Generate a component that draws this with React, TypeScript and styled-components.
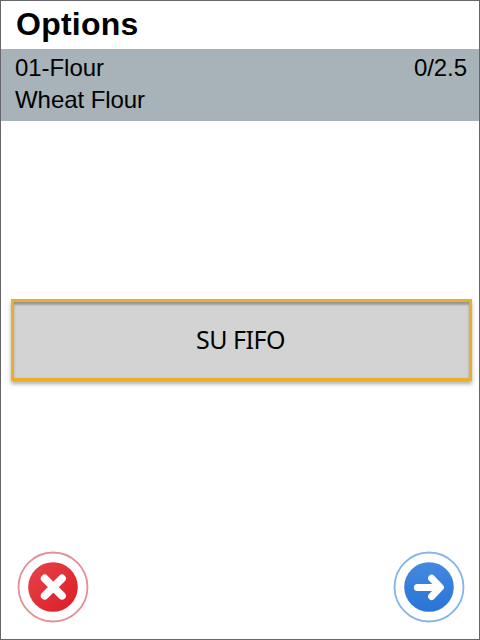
import React from "react";
import styled, { createGlobalStyle } from "styled-components";

const GlobalStyle = createGlobalStyle`
  * { box-sizing: border-box; }
  body { margin: 0; background: #fff; }
`;

const Screen = styled.main`
  display: flex;
  flex-direction: column;
  width: 480px;
  height: 640px;
  border: 1px solid #66656a;
  background: #fff;
  color: #000;
  font-family: "Liberation Sans", Arial, sans-serif;
`;

const Title = styled.h1`
  margin: 0;
  height: 48px;
  padding-left: 15px;
  font-size: 32px;
  line-height: 46px;
  font-weight: 700;
  letter-spacing: 0.25px;
`;

const Summary = styled.section`
  height: 72px;
  padding: 3px 12px 0 14px;
  background: #a8b2b9;
  font-size: 24px;
  line-height: 32px;
  letter-spacing: -0.06px;
`;

const SummaryRow = styled.div`
  display: flex;
  justify-content: space-between;
`;

const Content = styled.div`
  flex: 1;
  padding: 178px 7px 0 10px;
`;

const OptionButton = styled.button`
  display: block;
  width: 461px;
  height: 82px;
  padding: 0 2px 3px 0;
  border: 3px solid #eaae28;
  background: #d3d3d3;
  color: #000;
  font-family: "Noto Sans", sans-serif;
  font-size: 25px;
  letter-spacing: -0.5px;
  box-shadow: 0 3px 4px rgba(0, 0, 0, 0.32), inset 0 4px 2px -1px rgba(0, 0, 0, 0.22), inset 0 1px 3px rgba(0, 0, 0, 0.15);
`;

const Footer = styled.footer`
  display: flex;
  justify-content: space-between;
  padding: 0 14px 16px 16px;
`;

const RoundButton = styled.button`
  width: 72px;
  height: 72px;
  padding: 0;
  border: 0;
  background: none;

  svg { display: block; }
`;

export default function App() {
  return (
    <>
      <GlobalStyle />
      <Screen>
        <Title>Options</Title>
        <Summary>
          <SummaryRow><span>01-Flour</span><span>0/2.5</span></SummaryRow>
          <SummaryRow>Wheat Flour</SummaryRow>
        </Summary>
        <Content><OptionButton>SU FIFO</OptionButton></Content>
        <Footer>
          <RoundButton aria-label="Cancel">
            <svg width="72" height="72" viewBox="0 0 72 72">
              <defs><linearGradient id="red" x2="1" y2="1"><stop stopColor="#e8434b" /><stop offset="1" stopColor="#dc1c24" /></linearGradient></defs>
              <circle cx="36" cy="36" r="34.5" fill="#fff" stroke="#e58e94" strokeWidth="1.8" />
              <circle cx="36" cy="36" r="24.8" fill="url(#red)" />
              <path d="M27.7 27.4 45 44.7M45 27.4 27.7 44.7" fill="none" stroke="#fff" strokeWidth="7.8" strokeLinecap="round" />
            </svg>
          </RoundButton>
          <RoundButton aria-label="Continue">
            <svg width="72" height="72" viewBox="0 0 72 72">
              <defs><linearGradient id="blue" x2="0" y2="1"><stop stopColor="#4389df" /><stop offset="1" stopColor="#2875d6" /></linearGradient></defs>
              <circle cx="36" cy="36" r="34.5" fill="#fff" stroke="#83b5e8" strokeWidth="1.8" />
              <circle cx="36" cy="36" r="24.8" fill="url(#blue)" />
              <path d="M24.4 36.4H46M38.6 27.3 47.4 36.4 38.6 45.5" fill="none" stroke="#fff" strokeWidth="7" strokeLinecap="round" strokeLinejoin="round" />
            </svg>
          </RoundButton>
        </Footer>
      </Screen>
    </>
  );
}
